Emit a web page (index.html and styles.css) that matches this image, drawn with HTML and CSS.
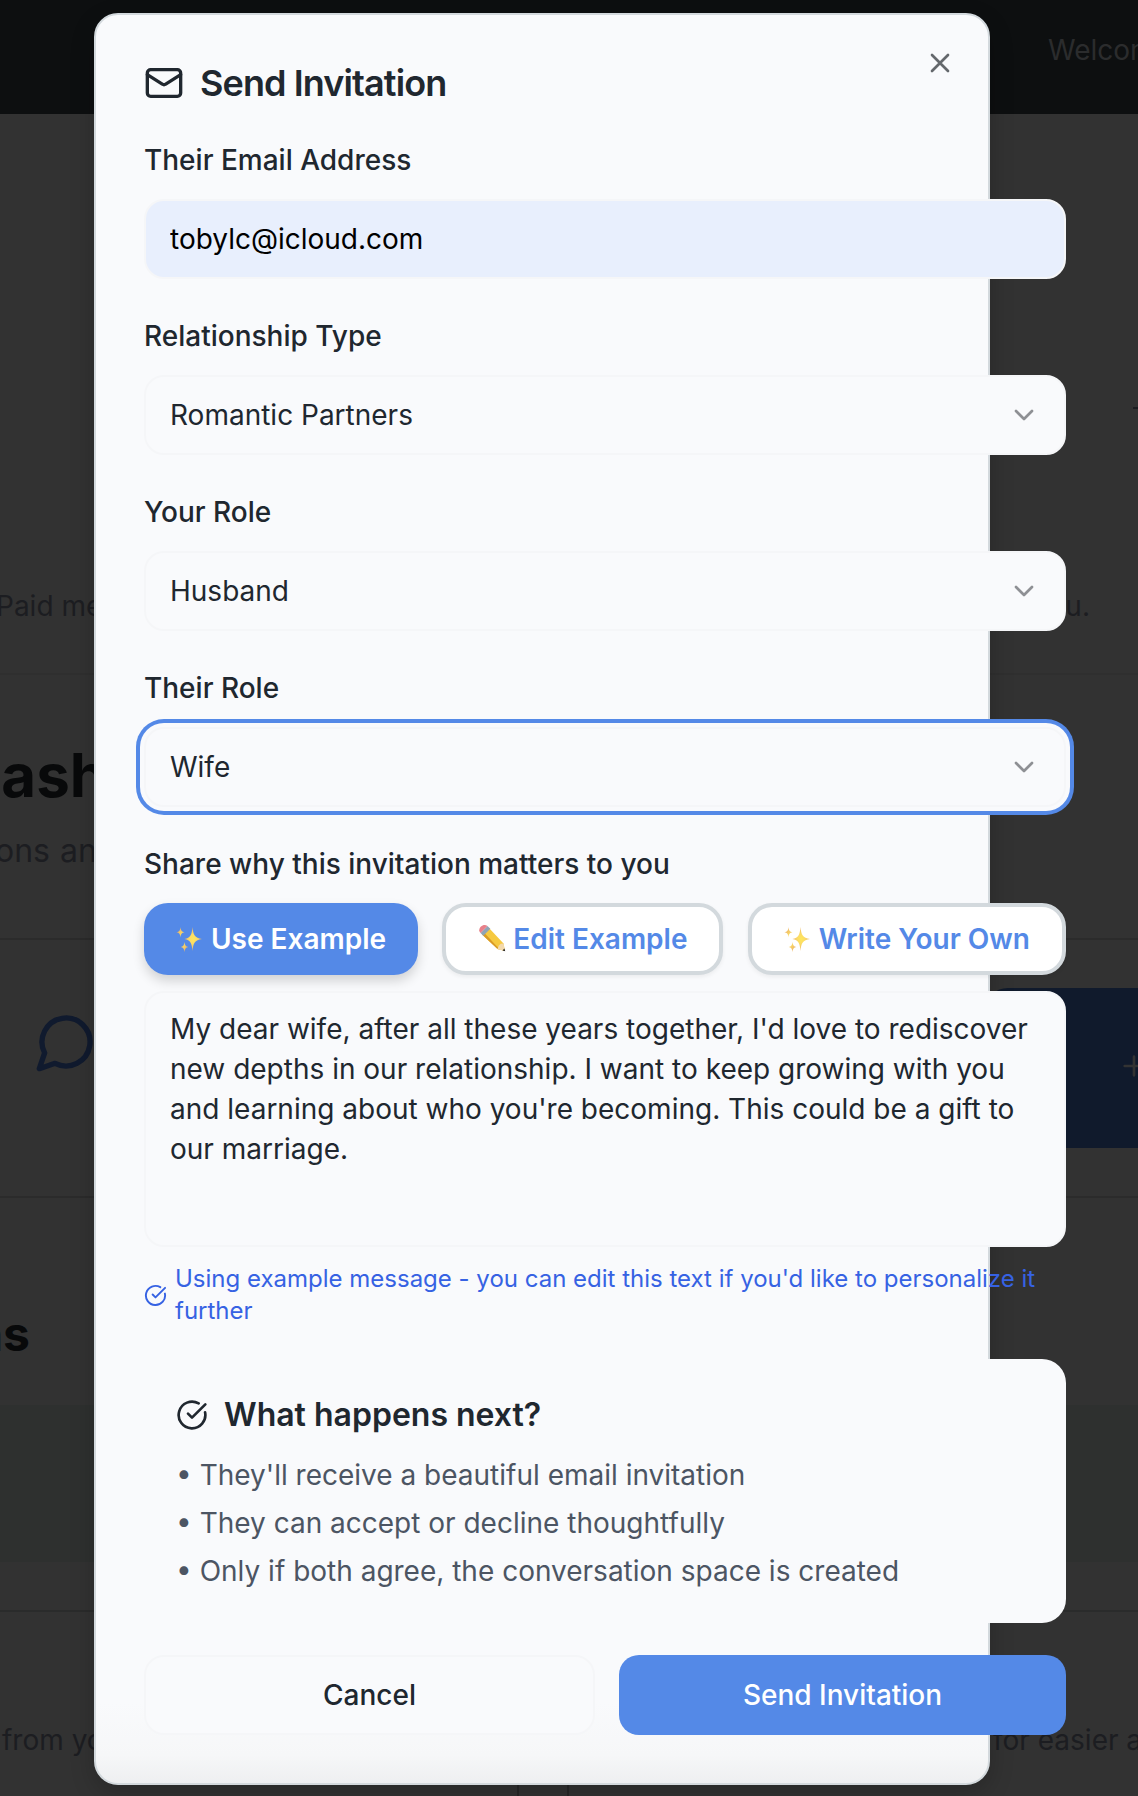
FILE: index.html
```html
<!DOCTYPE html>
<html lang="en">
<head>
<meta charset="utf-8">
<meta name="viewport" content="width=device-width, initial-scale=1">
<title>Send Invitation</title>
<link rel="stylesheet" href="styles.css">
</head>
<body>
<svg class="defs" aria-hidden="true">
  <symbol id="check" viewBox="0 0 24 24"><path d="M21.801 10A10 10 0 1 1 17 3.335"/><path d="m9 11 3 3L22 4"/></symbol>
  <symbol id="chevron" viewBox="0 0 24 24"><path d="m6 9 6 6 6-6"/></symbol>
  <radialGradient id="gold"><stop offset="0" stop-color="#ffe75a"/><stop offset=".4" stop-color="#fbdc66"/><stop offset="1" stop-color="#eeb768"/></radialGradient>
  <symbol id="sparkles" viewBox="0 0 28 28">
    <path fill="url(#gold)" d="M16.500 2c.7 8 2.200 10.800 9.500 12-7.300 1.200-8.800 4-9.500 12-.7-8-2-10.800-8-12 6-1.200 7.300-4 8-12z"/>
    <path fill="url(#gold)" d="M4.500 2c.3 3.500 1.200 4.700 4 5.300-2.800.6-3.700 1.800-4 5.300-.3-3.500-1.200-4.700-4-5.300 2.800-.6 3.700-1.800 4-5.300zM8.500 17c.3 3.200 1.200 4.400 3.800 5-2.600.6-3.500 1.800-3.800 5-.3-3.200-1.200-4.400-3.800-5 2.600-.6 3.500-1.800 3.800-5z"/>
  </symbol>
  <symbol id="pencil" viewBox="0 0 28 28">
    <path fill="#f6c93f" d="M4 9.500 19.500 24l7.500 2-1.500-7.500L11 3z"/>
    <path fill="#d99a26" d="m4 9.500 15.500 14.500 2.300.6L6 7.400z"/>
    <path fill="#f3d9ac" d="m19.500 24 1.200-3.200 2-2 2.800-.3L27 26z"/>
    <path fill="#222" d="m24.500 25.400 1.900-2 .8 2.900z"/>
    <path fill="#8fa3b5" d="m2.500 8 2.800 2.700 7-6.900L9.500 1z"/>
    <path fill="#e8808a" d="M2.500 8C-1.500 4 5-2.500 9.500 1z"/>
  </symbol>
</svg>

<div class="page">
  <header class="topbar"><span>Welcome</span></header>
  <section class="intro">
    <i class="dash"></i>
    <p class="note"><span>Paid members</span><span>you.</span></p>
  </section>
  <section class="heading">
    <h1>Dashboard</h1>
    <p><span>connections</span> and</p>
  </section>
  <section class="start">
    <svg class="chat" viewBox="0 0 24 24" aria-hidden="true"><path d="M7.900 20A9 9 0 1 0 4 16.100L2 22Z"/></svg>
    <div class="new"><svg viewBox="0 0 24 24" aria-hidden="true"><path d="M5 12h14M12 5v14"/></svg></div>
  </section>
  <section class="list"><h2>Invitations</h2></section>
  <div class="band"></div>
  <section class="tail">
    <p><span>from your</span><span>for easier access</span></p>
    <div class="tiles"><div></div><div></div></div>
  </section>
</div>

<div class="overlay">
  <div class="dialog" role="dialog" aria-modal="true" aria-labelledby="title">
    <button class="close" type="button" aria-label="Close"><svg viewBox="0 0 24 24" aria-hidden="true"><path d="M18 6 6 18M6 6l12 12"/></svg></button>
    <h2 class="title" id="title">
      <svg viewBox="0 0 24 24" aria-hidden="true"><rect x="2" y="4" width="20" height="16" rx="2"/><path d="m22 7-8.970 5.700a1.940 1.940 0 0 1-2.060 0L2 7"/></svg>
      Send Invitation
    </h2>
    <form class="form">
      <div class="field">
        <label for="email">Their Email Address</label>
        <input class="control filled" id="email" type="email" value="tobylc@icloud.com">
      </div>
      <div class="field">
        <label for="type">Relationship Type</label>
        <div class="pick"><select class="control" id="type"><option>Romantic Partners</option></select><svg aria-hidden="true"><use href="#chevron"/></svg></div>
      </div>
      <div class="field">
        <label for="mine">Your Role</label>
        <div class="pick"><select class="control" id="mine"><option>Husband</option></select><svg aria-hidden="true"><use href="#chevron"/></svg></div>
      </div>
      <div class="field">
        <label for="theirs">Their Role</label>
        <div class="pick"><select class="control active" id="theirs"><option>Wife</option></select><svg aria-hidden="true"><use href="#chevron"/></svg></div>
      </div>
      <div class="field message">
        <label for="message">Share why this invitation matters to you</label>
        <div class="modes">
          <button class="mode on" type="button"><svg aria-hidden="true"><use href="#sparkles"/></svg>Use Example</button>
          <button class="mode" type="button"><svg aria-hidden="true"><use href="#pencil"/></svg>Edit Example</button>
          <button class="mode" type="button"><svg aria-hidden="true"><use href="#sparkles"/></svg>Write Your Own</button>
        </div>
        <textarea class="control" id="message">My dear wife, after all these years together, I'd love to rediscover new depths in our relationship. I want to keep growing with you and learning about who you're becoming. This could be a gift to our marriage.</textarea>
        <p class="hint"><svg aria-hidden="true"><use href="#check"/></svg>Using example message - you can edit this text if you'd like to personalize it further</p>
      </div>
      <section class="next">
        <h3><svg aria-hidden="true"><use href="#check"/></svg>What happens next?</h3>
        <ul>
          <li>• They'll receive a beautiful email invitation</li>
          <li>• They can accept or decline thoughtfully</li>
          <li>• Only if both agree, the conversation space is created</li>
        </ul>
      </section>
      <div class="actions">
        <button class="cancel" type="button">Cancel</button>
        <button class="send" type="submit">Send Invitation</button>
      </div>
    </form>
  </div>
</div>
</body>
</html>
```
FILE: styles.css
```css
* { box-sizing: border-box; margin: 0; }
html { background: #323232; }
body {
  min-height: 100vh;
  overflow: hidden;
  font: 400 28px/40px Inter, "Liberation Sans", sans-serif;
  color: #20272f;
}
svg { flex: none; fill: none; stroke: currentColor; stroke-width: 2; stroke-linecap: round; stroke-linejoin: round; }
.defs { position: absolute; width: 0; height: 0; }
button, input, select, textarea { font: inherit; color: inherit; }

/* dimmed page */
.page { position: absolute; inset: 0; display: flex; flex-direction: column; overflow: hidden; color: #1c1d21; white-space: nowrap; }
.page > * { flex: none; }
.topbar { display: flex; justify-content: flex-end; height: 114px; padding-top: 30px; background: #0d0f10; color: #2b2c2d; }
.topbar span { width: 90px; }
.intro { height: 561px; padding-top: 293px; border-bottom: 2px solid #2f2f2f; }
.dash { display: block; width: 5px; height: 2px; margin-left: auto; background: #1c1d21; }
.note { display: flex; justify-content: space-between; margin: 177px 48px 0 -4px; }
.heading { height: 263px; padding-top: 64px; }
.heading h1 { margin-left: -42px; font-size: 60px; line-height: 72px; color: #08090a; }
.heading p { display: flex; gap: 10px; margin-top: 20px; font-size: 32px; }
.heading span { display: flex; justify-content: flex-end; width: 50px; }
.start { display: flex; justify-content: space-between; height: 260px; padding: 48px 0 0 34px; border: solid #2b2b2b; border-width: 2px 0; }
.chat { width: 64px; height: 64px; margin-top: 22px; color: #101a2e; }
.new { width: 154px; height: 160px; padding: 62px 0 0 134px; border-radius: 24px 0 0 24px; background: #101a2c; color: #333; }
.new svg { width: 32px; height: 32px; }
.list { height: 207px; padding-top: 108px; }
.list h2 { display: flex; justify-content: flex-end; width: 30px; font-size: 48px; line-height: 56px; color: #08090a; }
.band { height: 157px; background: #2e302f; }
.page .tail { flex: 1; display: flex; flex-direction: column; margin-top: 48px; padding-top: 108px; border-top: 2px solid #2a2b2b; }
.tail p { display: flex; justify-content: space-between; margin-left: 2px; }
.tail span + span { width: 145px; }
.tiles { flex: 1; display: grid; grid-template-columns: 519fr 571fr; gap: 48px; }
.tiles div { border: 0 solid #262626; border-right-width: 2px; }
.tiles div + div { border-width: 0 0 0 2px; }

/* dialog */
.overlay { position: relative; padding: 13px 148px 12px 94px; }
.dialog {
  position: relative;
  padding: 48px;
  border: 2px solid #d3d9dd;
  border-radius: 24px;
  background: linear-gradient(to top, #eeeff1, #f6f7f8 28px, #f9fafc 80px);
  box-shadow: 0 8px 24px rgb(0 0 0 / 20%);
}
.close { position: absolute; top: 32px; right: 32px; display: grid; padding: 0; border: 0; background: none; color: #64686c; }
.close svg { width: 32px; height: 32px; }
.title { display: flex; align-items: center; gap: 16px; font-size: 36px; font-weight: 600; line-height: 40px; letter-spacing: -0.025em; }
.title svg { width: 40px; height: 40px; }
.form { display: grid; gap: 32px; width: calc(100% + 126px); margin-top: 32px; }
.field { display: grid; }
.field label { margin-bottom: 14px; line-height: 50px; font-weight: 500; }
.control { width: 100%; height: 80px; padding: 0 24px; border: 2px solid #f5f6f8; border-radius: 20px; background: #f9fafc; outline: none; appearance: none; }
.filled { background: #e8effd; color: #000; }
.pick { display: grid; align-items: center; }
.pick > * { grid-area: 1 / 1; }
.pick svg { justify-self: end; width: 32px; height: 32px; margin-right: 26px; color: #8e9094; pointer-events: none; }
.active { box-shadow: 0 0 0 4px #f9fafc, 0 0 0 8px #5489e7; }
.modes { display: flex; justify-content: space-between; margin-bottom: 16px; }
.mode { display: flex; align-items: center; gap: 7px; height: 72px; padding: 0 32px; border: 4px solid #d3d9dd; border-radius: 24px; background: #fff; color: #5489e7; font-weight: 600; box-shadow: 0 2px 4px rgb(0 0 0 / 6%); }
.mode svg { width: 28px; height: 28px; stroke: none; }
.mode.on { border: 0; background: #5489e7; color: #fff; box-shadow: 0 6px 12px rgb(0 0 0 / 16%); }
textarea.control { display: block; height: 256px; padding: 16px 24px; resize: none; }
.hint { display: flex; align-items: center; gap: 8px; margin-top: 16px; font-size: 24px; line-height: 32px; color: #3662e3; }
.hint svg { width: 23px; height: 23px; }
.next { padding: 32px; border-radius: 24px; background: #f9fafc; }
.next h3 { display: flex; align-items: center; gap: 16px; margin-bottom: 16px; font-size: 32px; line-height: 48px; font-weight: 600; }
.next svg { width: 32px; height: 32px; }
.next ul { display: grid; gap: 8px; padding: 0; list-style: none; color: #4c5563; }
.actions { display: flex; gap: 24px; }
.actions button { flex: 1; height: 80px; padding: 0 32px; border: 0; border-radius: 20px; background: #5489e7; color: #fff; font-weight: 500; }
.actions .cancel { border: 2px solid #f5f6f8; background: #f9fafc; color: #20272f; }
```
